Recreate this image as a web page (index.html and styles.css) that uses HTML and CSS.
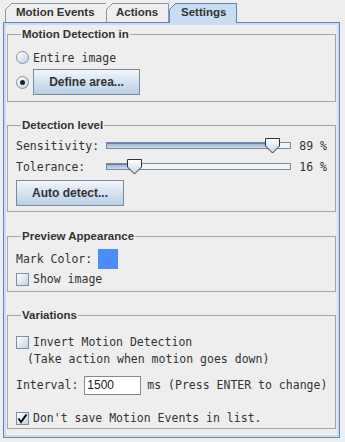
FILE: index.html
```html
<!DOCTYPE html>
<html>
<head>
<meta charset="utf-8">
<link rel="stylesheet" href="styles.css">
</head>
<body>
<div class="tabs">
  <div class="tab tab-events">Motion Events</div>
  <div class="tab tab-actions">Actions</div>
  <div class="tab tab-settings">Settings</div>
</div>
<div class="panel">
  <div class="group g-detect">
    <div class="group-title">Motion Detection in</div>
    <div class="row row-entire"><span class="radio"></span><span class="lbl">Entire image</span></div>
    <div class="row row-define"><span class="radio checked"></span><button class="btn btn-define">Define area...</button></div>
  </div>

  <div class="group g-level">
    <div class="group-title">Detection level</div>
    <div class="row row-slider row-first">
      <span class="slabel">Sensitivity:</span>
      <div class="slider">
        <div class="track"><div class="fill" style="width:162px"></div></div>
        <svg class="thumb" style="left:159px" width="16" height="16" viewBox="0 0 16 16"><defs><linearGradient id="tg1" x1="0" y1="0" x2="0" y2="1"><stop offset="0" stop-color="#ffffff"/><stop offset="1" stop-color="#c4d6ea"/></linearGradient></defs><path d="M0.5 0.5 H14.5 V8 L7.5 15 L0.5 8 Z" fill="url(#tg1)" stroke="#333" stroke-width="1"/></svg>
      </div>
      <span class="sval">89 %</span>
    </div>
    <div class="row row-slider">
      <span class="slabel">Tolerance:</span>
      <div class="slider">
        <div class="track"><div class="fill" style="width:24px"></div></div>
        <svg class="thumb" style="left:21px" width="16" height="16" viewBox="0 0 16 16"><defs><linearGradient id="tg2" x1="0" y1="0" x2="0" y2="1"><stop offset="0" stop-color="#ffffff"/><stop offset="1" stop-color="#c4d6ea"/></linearGradient></defs><path d="M0.5 0.5 H14.5 V8 L7.5 15 L0.5 8 Z" fill="url(#tg2)" stroke="#333" stroke-width="1"/></svg>
      </div>
      <span class="sval">16 %</span>
    </div>
    <button class="btn btn-auto">Auto detect...</button>
  </div>

  <div class="group g-preview">
    <div class="group-title">Preview Appearance</div>
    <div class="row row-mark"><span class="lbl">Mark Color:</span><span class="swatch"></span></div>
    <div class="row row-show"><span class="check"></span><span class="lbl">Show image</span></div>
  </div>

  <div class="group g-var">
    <div class="group-title">Variations</div>
    <div class="row row-invert"><span class="check"></span><span class="lbl">Invert Motion Detection</span></div>
    <div class="note">(Take action when motion goes down)</div>
    <div class="row row-interval"><span class="lbl">Interval:</span><span class="field">1500</span><span class="lbl">ms (Press ENTER to change)</span></div>
    <div class="row row-save"><span class="check checked"><svg width="11" height="11" viewBox="0 0 11 11"><path d="M1.5 5.5 L4 9 L9.5 1.5" fill="none" stroke="#000" stroke-width="2"/></svg></span><span class="lbl">Don't save Motion Events in list.</span></div>
  </div>
</div>
</body>
</html>
```
FILE: styles.css
```css
html, body {
  margin: 0;
  padding: 0;
}
body {
  background: #eeeeee;
  width: 345px;
  height: 442px;
  overflow: hidden;
  font-family: "DejaVu Sans Mono", monospace;
  font-size: 11.5px;
  color: #333333;
}

/* ---------- tabs ---------- */
.tabs {
  display: flex;
  align-items: flex-end;
  height: 22px;
  padding-left: 5px;
  position: relative;
  z-index: 2;
}
.tab {
  position: relative;
  box-sizing: border-box;
  height: 19px;
  border-top: 1px solid #8a99a6;
  border-left: 1px solid #8a99a6;
  font: bold 11.5px/17px "Liberation Sans", Arial, sans-serif;
  color: #333333;
  white-space: nowrap;
}
.tab::before {
  content: "";
  position: absolute;
  top: -1px;
  left: -1px;
  width: 7px;
  height: 7px;
  background: linear-gradient(to bottom right, #eeeeee 0 calc(50% - 0.6px), #8a99a6 calc(50% - 0.6px) calc(50% + 0.6px), transparent calc(50% + 0.6px));
}
.tab-events {
  width: 101px;
  padding-left: 10px;
}
.tab-actions {
  width: 63px;
  padding-left: 9px;
  border-right: 1px solid #8a99a6;
}
.tab-settings {
  width: 68px;
  padding-left: 11px;
  height: 20px;
  margin-bottom: -1px;
  background: #c8ddf2;
  border-color: #6382bf;
  border-right: 1px solid #6382bf;
}
.tab-settings::before {
  background: linear-gradient(to bottom right, #eeeeee 0 calc(50% - 0.6px), #6382bf calc(50% - 0.6px) calc(50% + 0.6px), transparent calc(50% + 0.6px));
}

/* ---------- panel ---------- */
.panel {
  position: relative;
  z-index: 1;
  margin-left: 3px;
  width: 337px;
  height: 416px;
  box-sizing: border-box;
  border: 1px solid #6382bf;
  border-bottom-color: #7a8a99;
  box-shadow: inset 0 0 0 2px #c8ddf2;
  padding: 11px 3px 0 3px;
  display: flex;
  flex-direction: column;
}

/* ---------- groups ---------- */
.group {
  border: 1px solid #a5a5a5;
  padding: 0 8px;
  display: flex;
  flex-direction: column;
  align-items: flex-start;
}
.group + .group {
  margin-top: 23px;
}
.group.g-preview {
  margin-top: 24px;
}
.group-title {
  margin: -8px 0 0 5px;
  padding: 0 1px;
  background: #eeeeee;
  font: bold 11.5px/14px "Liberation Sans", Arial, sans-serif;
  color: #333333;
  white-space: nowrap;
}
.row {
  display: flex;
  align-items: center;
  white-space: nowrap;
}

/* radio / check */
.radio {
  box-sizing: border-box;
  width: 13px;
  height: 13px;
  border-radius: 50%;
  border: 1px solid #7f8e9c;
  background: linear-gradient(to bottom right, #ffffff, #c3d3e4);
  display: flex;
  align-items: center;
  justify-content: center;
  flex: none;
}
.radio.checked::after {
  content: "";
  width: 5px;
  height: 5px;
  border-radius: 50%;
  background: #222;
}
.check {
  box-sizing: border-box;
  width: 13px;
  height: 13px;
  border: 1px solid #7f8e9c;
  background: linear-gradient(to bottom right, #ffffff, #c3d3e4);
  display: flex;
  align-items: center;
  justify-content: center;
  flex: none;
}

/* buttons */
.btn {
  box-sizing: border-box;
  height: 26px;
  border: 1px solid #7a8a99;
  border-radius: 0;
  background: linear-gradient(to bottom, #f2f6fa 0%, #dde8f3 35%, #b8cfe5 100%);
  font: bold 12px "Liberation Sans", Arial, sans-serif;
  color: #333333;
  padding: 0;
}

/* group 1 */
.g-detect {
  padding-bottom: 6px;
}
.row-entire {
  margin-top: 5px;
  height: 23px;
}
.row-entire .lbl {
  margin-left: 4px;
}
.row-define {
  height: 26px;
}
.btn-define {
  width: 107px;
  margin-left: 4px;
}

/* group 2 */
.g-level {
  padding-bottom: 5px;
}
.row-slider {
  height: 21px;
  width: 100%;
}
.row-first {
  margin-top: 3px;
}
.slabel {
  width: 99px;
}
.slider {
  position: relative;
  width: 185px;
  height: 21px;
  display: flex;
  align-items: center;
}
.track {
  box-sizing: border-box;
  width: 185px;
  height: 7px;
  border: 1px solid #7a8a99;
  background: #f4f4f4;
  display: flex;
}
.fill {
  height: 100%;
  background: linear-gradient(to bottom, #6382bf 0 1px, #a3b8cc 1px, #c8ddf2 100%);
}
.thumb {
  position: absolute;
  top: 3px;
}
.sval {
  margin-left: 8px;
}
.btn-auto {
  width: 108px;
  margin-top: 3px;
}

/* group 3 */
.g-preview {
  padding-bottom: 2px;
}
.row-mark {
  margin-top: 6px;
  height: 20px;
}
.swatch {
  width: 20px;
  height: 20px;
  margin-left: 6px;
  background: #4b8df8;
}
.row-show {
  height: 20px;
}
.row-show .lbl,
.row-invert .lbl,
.row-save .lbl {
  margin-left: 4px;
}

/* group 4 */
.g-var {
  padding-bottom: 0;
}
.row-invert {
  margin-top: 10px;
  height: 20px;
}
.note {
  height: 14px;
  line-height: 14px;
  margin-left: 11px;
  white-space: nowrap;
}
.row-interval {
  margin-top: 6px;
  height: 26px;
}
.field {
  box-sizing: border-box;
  width: 57px;
  height: 19px;
  margin: 0 6px 0 6px;
  border: 1px solid #7a8a99;
  background: #ffffff;
  font: 12px/17px "Liberation Sans", Arial, sans-serif;
  color: #222;
  padding-left: 2px;
}
.row-save {
  margin-top: 10px;
  height: 20px;
}
```
